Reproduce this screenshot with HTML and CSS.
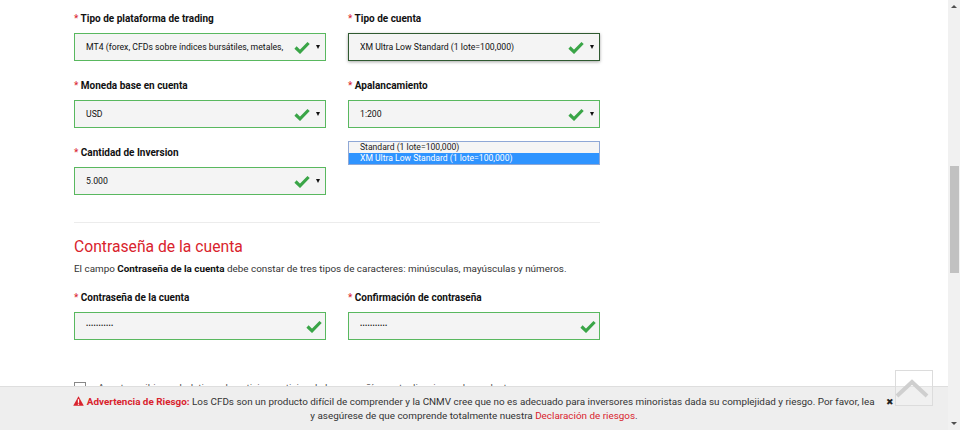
FILE: index.html
```html
<!DOCTYPE html>
<html lang="es">
<head>
<meta charset="utf-8">
<title>Registro</title>
<link rel="stylesheet" href="styles.css">
</head>
<body>
<div class="page">
  <div class="content">
    <div class="grid">
      <div class="group">
        <div class="label"><span class="req">*</span> Tipo de plataforma de trading</div>
        <div class="field">
          <span class="value">MT4 (forex, CFDs sobre índices bursátiles, metales,</span>
          <svg class="check" viewBox="0 0 16 13" width="16" height="13"><path d="M1.5 6.5 L6 10.8 L14.6 2" /></svg>
          <span class="arrow"></span>
        </div>
      </div>
      <div class="group">
        <div class="label"><span class="req">*</span> Tipo de cuenta</div>
        <div class="field focus">
          <span class="value">XM Ultra Low Standard (1 lote=100,000)</span>
          <svg class="check" viewBox="0 0 16 13" width="16" height="13"><path d="M1.5 6.5 L6 10.8 L14.6 2" /></svg>
          <span class="arrow"></span>
        </div>
      </div>
      <div class="group">
        <div class="label"><span class="req">*</span> Moneda base en cuenta</div>
        <div class="field">
          <span class="value">USD</span>
          <svg class="check" viewBox="0 0 16 13" width="16" height="13"><path d="M1.5 6.5 L6 10.8 L14.6 2" /></svg>
          <span class="arrow"></span>
        </div>
      </div>
      <div class="group popup-host">
        <div class="label"><span class="req">*</span> Apalancamiento</div>
        <div class="field">
          <span class="value">1:200</span>
          <svg class="check" viewBox="0 0 16 13" width="16" height="13"><path d="M1.5 6.5 L6 10.8 L14.6 2" /></svg>
          <span class="arrow"></span>
        </div>
        <ul class="popup">
          <li>Standard (1 lote=100,000)</li>
          <li class="sel">XM Ultra Low Standard (1 lote=100,000)</li>
        </ul>
      </div>
      <div class="group">
        <div class="label"><span class="req">*</span> Cantidad de Inversion</div>
        <div class="field">
          <span class="value">5.000</span>
          <svg class="check" viewBox="0 0 16 13" width="16" height="13"><path d="M1.5 6.5 L6 10.8 L14.6 2" /></svg>
          <span class="arrow"></span>
        </div>
      </div>
    </div>

    <hr class="divider">

    <h2 class="title">Contraseña de la cuenta</h2>
    <p class="hint">El campo <b>Contraseña de la cuenta</b> debe constar de tres tipos de caracteres: minúsculas, mayúsculas y números.</p>

    <div class="grid">
      <div class="group">
        <div class="label"><span class="req">*</span> Contraseña de la cuenta</div>
        <div class="field pw">
          <span class="value dots">•••••••••••</span>
          <svg class="check" viewBox="0 0 16 13" width="16" height="13"><path d="M1.5 6.5 L6 10.8 L14.6 2" /></svg>
        </div>
      </div>
      <div class="group">
        <div class="label"><span class="req">*</span> Confirmación de contraseña</div>
        <div class="field pw">
          <span class="value dots">•••••••••••</span>
          <svg class="check" viewBox="0 0 16 13" width="16" height="13"><path d="M1.5 6.5 L6 10.8 L14.6 2" /></svg>
        </div>
      </div>
    </div>

    <div class="consent">
      <span class="box"><span class="tick"></span></span>
      <span>Acepto recibir sus boletines de noticias, noticias de la compañía y actualizaciones de productos</span>
    </div>
  </div>

  <div class="risk">
    <p class="risk-text"><svg class="warn" viewBox="0 0 12 11" width="11" height="10"><path d="M6 0.3 L11.8 10.6 L0.2 10.6 Z" fill="#d9232d"/><rect x="5.3" y="3.5" width="1.4" height="4" fill="#fff"/><rect x="5.3" y="8.4" width="1.4" height="1.3" fill="#fff"/></svg> <b class="risk-title">Advertencia de Riesgo:</b> Los CFDs son un producto difícil de comprender y la CNMV cree que no es adecuado para inversores minoristas dada su complejidad y riesgo. Por favor, lea<br>y asegúrese de que comprende totalmente nuestra <a class="risk-link">Declaración de riesgos</a>.</p>
    <span class="close">✖</span>
  </div>

  <div class="totop">
    <svg viewBox="0 0 38 36" width="38" height="36"><path d="M2 26 L17 12 L32 26" fill="none" stroke="#cfcfcf" stroke-width="4"/></svg>
  </div>

  <div class="scrollbar">
    <span class="sb-up"></span>
    <span class="sb-thumb"></span>
    <span class="sb-down"></span>
  </div>
</div>
</body>
</html>
```

FILE: styles.css
```css
* { box-sizing: border-box; }
html, body {
  margin: 0;
  padding: 0;
  height: 430px;
  overflow: hidden;
  background: #fff;
  font-family: Roboto, "Liberation Sans", Arial, sans-serif;
  color: #222;
}
.page {
  position: relative;
  width: 960px;
  height: 430px;
  overflow: hidden;
}
.content {
  width: 948px;
  padding: 12px 0 0 74px;
}
.grid {
  display: grid;
  grid-template-columns: 252px 252px;
  column-gap: 22px;
  row-gap: 18px;
}
.group { position: relative; }
.label {
  font-size: 10px;
  font-weight: 700;
  line-height: 14px;
  height: 14px;
  margin-bottom: 7px;
  color: #111;
}
.req { color: #d9232d; font-weight: 400; }
.field {
  height: 28px;
  background: #f4f4f4;
  border: 1px solid #59b85f;
  display: flex;
  align-items: center;
  padding: 0 3px 0 11px;
  font-size: 8.7px;
}
.field.focus {
  border-color: #2f5a30;
  box-shadow: 0 1px 3px rgba(0,0,0,0.35);
}
.value {
  flex: 1;
  white-space: nowrap;
  overflow: hidden;
  color: #111;
}
.check { flex: none; margin-right: 6px; }
.check path {
  fill: none;
  stroke: #3aa547;
  stroke-width: 3.2;
}
.pw .check { margin-right: 0; }
.arrow {
  flex: none;
  width: 0;
  height: 0;
  border-left: 2.5px solid transparent;
  border-right: 2.5px solid transparent;
  border-top: 4px solid #111;
  margin-right: 2px;
}
.dots {
  font-size: 6.5px;
  letter-spacing: 0.3px;
  color: #111;
}
.popup {
  position: absolute;
  left: 0;
  top: 62px;
  width: 252px;
  margin: 0;
  padding: 0;
  list-style: none;
  border: 1px solid #8fa8d6;
  background: #f5f5f5;
  font-size: 8.6px;
  line-height: 11px;
  z-index: 2;
}
.popup li { padding-left: 11px; height: 11px; color: #222; }
.popup li.sel { background: #2f94ff; color: #fff; }
.divider {
  width: 526px;
  margin: 27px 0 0;
  border: 0;
  border-top: 1px solid #ececec;
}
.title {
  margin: 14px 0 0;
  font-size: 15.7px;
  line-height: 20px;
  font-weight: 400;
  color: #d9232d;
}
.hint {
  margin: 5px 0 15px;
  font-size: 9.9px;
  line-height: 14px;
  color: #333;
}
.hint b { color: #111; }
.consent {
  margin-top: 41px;
  display: flex;
  align-items: center;
  gap: 12px;
  font-size: 9.9px;
  line-height: 14px;
  color: #555;
}
.box {
  width: 12px;
  height: 12px;
  border: 1px solid #888;
  display: inline-flex;
  align-items: center;
  justify-content: center;
}
.tick { width: 3px; height: 3px; background: #111; }
.risk {
  position: absolute;
  left: 0;
  top: 386px;
  width: 948px;
  height: 44px;
  background: #eeeeee;
  border-top: 1px solid #dedede;
  z-index: 3;
}
.risk-text {
  margin: 8px 0 0;
  text-align: center;
  font-size: 9.9px;
  line-height: 14px;
  color: #333;
}
.warn { vertical-align: -1px; }
.risk-title { color: #d9232d; }
.risk-link { color: #d9232d; }
.close {
  position: absolute;
  left: 886px;
  top: 10px;
  font-size: 9px;
  color: #222;
}
.totop {
  position: absolute;
  left: 895px;
  top: 370px;
  width: 38px;
  height: 36px;
  border: 1px solid #dcdcdc;
  background: rgba(255,255,255,0.15);
  z-index: 4;
}
.totop svg { display: block; margin: -1px 0 0 -1px; }
.scrollbar {
  position: absolute;
  right: 0;
  top: 0;
  width: 12px;
  height: 430px;
  background: #f1f1f1;
  z-index: 5;
}
.sb-up, .sb-down {
  position: absolute;
  left: 3px;
  width: 0;
  height: 0;
  border-left: 3px solid transparent;
  border-right: 3px solid transparent;
}
.sb-up { top: 5px; border-bottom: 3px solid #505050; }
.sb-down { bottom: 5px; border-top: 3px solid #505050; }
.sb-thumb {
  position: absolute;
  left: 1.5px;
  top: 166px;
  width: 9px;
  height: 107px;
  background: #c1c1c1;
}
```
